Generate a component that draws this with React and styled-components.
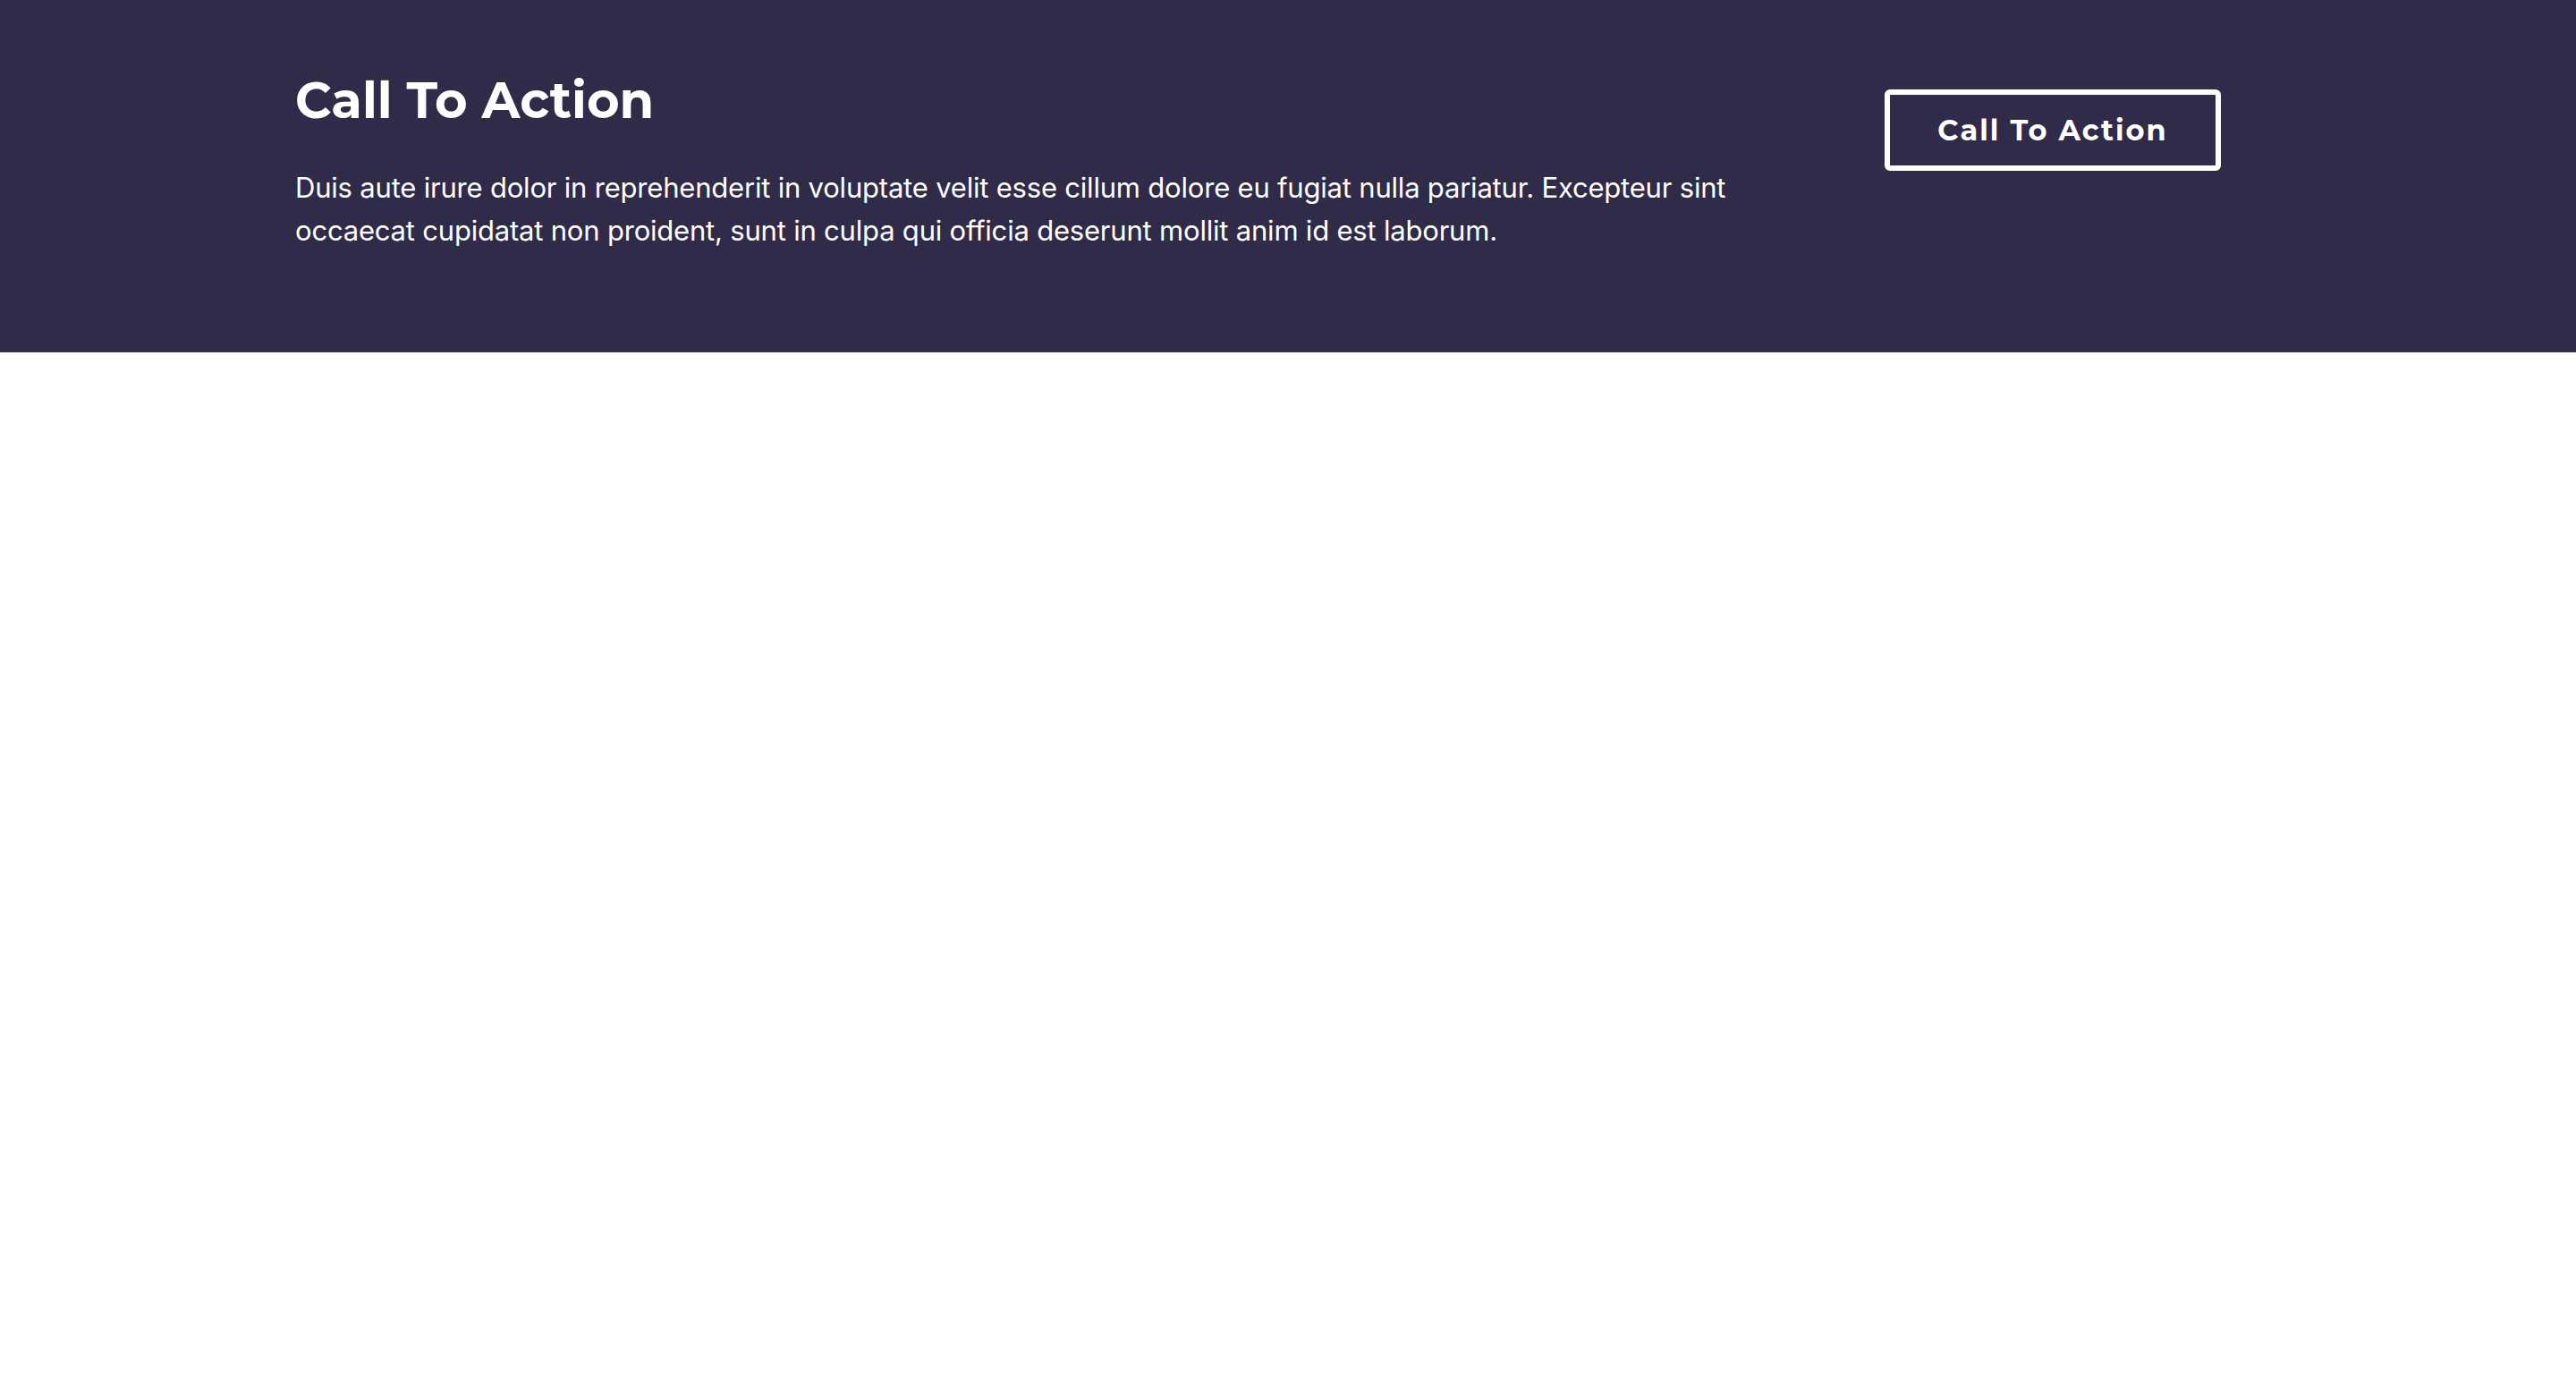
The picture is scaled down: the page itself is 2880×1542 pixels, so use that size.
import styled, { createGlobalStyle } from "styled-components";

const GlobalStyle = createGlobalStyle`
    html, body {
        margin: 0;
        padding: 0;
        background: #ffffff;
    }
    * {
        box-sizing: border-box;
    }
`

const App = () => {
    return (
        <>
            <GlobalStyle />
            <Banner>
                <Container>
                    <Copy>
                        <Title>Call To Action</Title>
                        <Text>
                            Duis aute irure dolor in reprehenderit in voluptate velit esse cillum dolore eu fugiat nulla pariatur. Excepteur sint occaecat cupidatat non proident, sunt in culpa qui officia deserunt mollit anim id est laborum.
                        </Text>
                    </Copy>
                    <Actions>
                        <OutlineButton type="button">Call To Action</OutlineButton>
                    </Actions>
                </Container>
            </Banner>
        </>
    );
}

export default App;

const Banner = styled.section`
    background-color: #2f2b48;
    color: #ffffff;
    padding: 79px 0 80px;
`

const Container = styled.div`
    width: 2280px;
    max-width: 100%;
    margin: 0 auto;
    padding: 0 30px;
    display: grid;
    grid-template-columns: 1fr 510px;
    column-gap: 60px;
    align-items: start;
`

const Copy = styled.div`
    min-width: 0;
`

const Title = styled.h2`
    margin: 0 0 41px;
    font-family: "Montserrat", "Inter", "Noto Sans", sans-serif;
    font-weight: 700;
    font-size: 56px;
    line-height: 66px;
    letter-spacing: 0;
    color: #ffffff;
`

const Text = styled.p`
    margin: 0 0 32px;
    font-family: "Inter", "Noto Sans", sans-serif;
    font-weight: 400;
    font-size: 31px;
    line-height: 48px;
    letter-spacing: -0.2px;
    color: #ffffff;
`

const Actions = styled.div`
    display: flex;
    justify-content: center;
    padding-top: 21px;
`

const OutlineButton = styled.button`
    background: transparent;
    color: #ffffff;
    border: 6px solid #ffffff;
    border-radius: 6px;
    padding: 16px 53px 15px;
    font-family: "Montserrat", "Inter", "Noto Sans", sans-serif;
    font-weight: 700;
    font-size: 32px;
    line-height: 48px;
    letter-spacing: 2px;
    cursor: pointer;
    white-space: nowrap;
`
